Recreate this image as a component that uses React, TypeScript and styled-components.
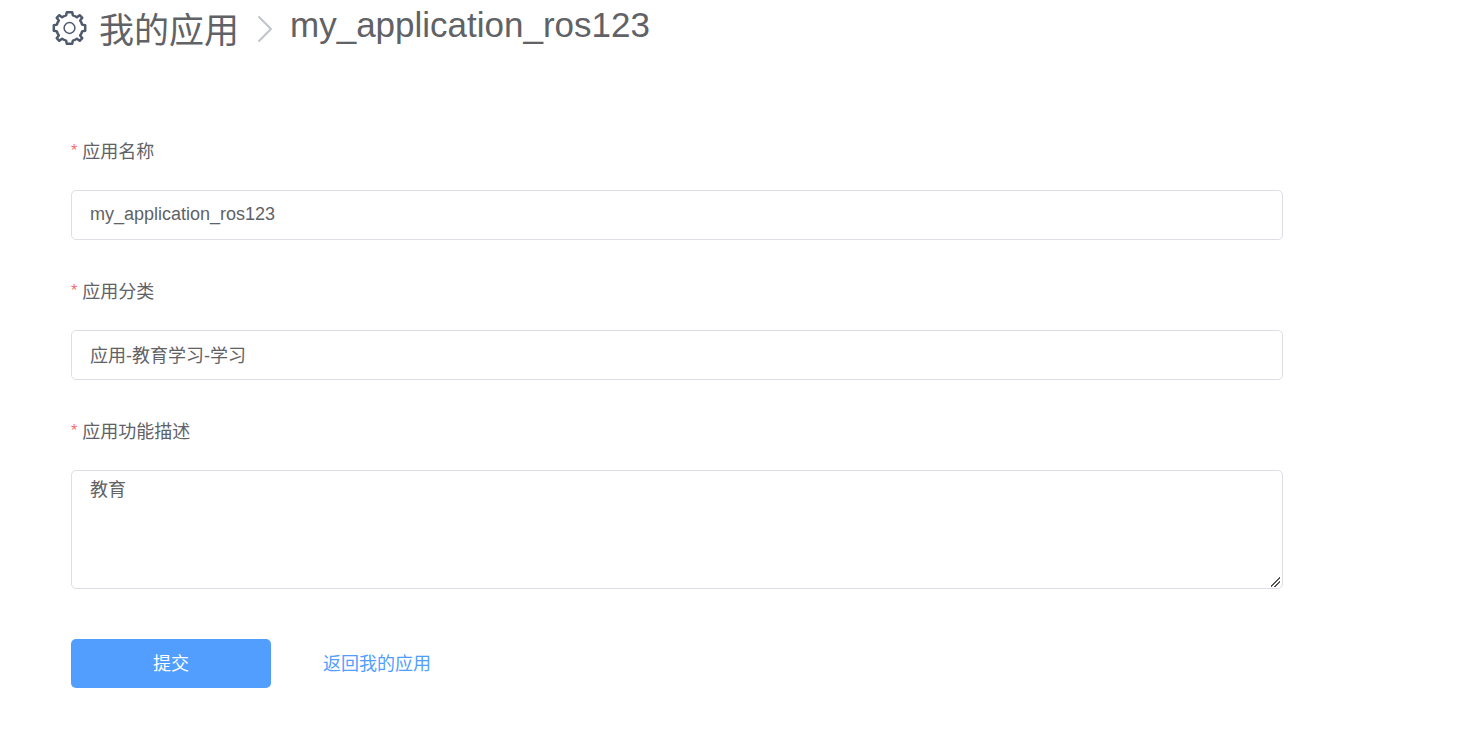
import React from "react";
import styled, { createGlobalStyle } from "styled-components";

const GlobalStyle = createGlobalStyle`
  *, *::before, *::after { box-sizing: border-box; }
  body {
    margin: 0;
    background: #fff;
    color: #606266;
    font-family: "Liberation Sans", Arial, "Noto Sans CJK SC", sans-serif;
  }
  input, textarea, button { font-family: inherit; }
`;

const Breadcrumb = styled.nav`
  display: flex;
  align-items: flex-start;
  padding: 0 52px;
  height: 60px;
  font-size: 35px;
  line-height: 50px;
  white-space: nowrap;
`;

const CrumbLink = styled.a`
  display: flex;
  align-items: center;
  gap: 12px;
  padding-top: 6px;
  color: #606266;
  text-decoration: none;

  svg {
    margin-bottom: 6px;
  }
`;

const Separator = styled.svg`
  margin: 14px 17px 0 18px;
`;

const CurrentPage = styled.span``;

const Form = styled.form`
  display: flex;
  flex-direction: column;
  gap: 30px;
  margin: 70px 196px 40px 71px;
`;

const Field = styled.div`
  display: flex;
  flex-direction: column;
  gap: 18px;
`;

const Label = styled.label`
  display: flex;
  gap: 5px;
  padding-top: 2px;
  font-size: 18px;
  line-height: 40px;

  &::before {
    content: "*";
    color: #f56c6c;
    font-size: 16px;
    line-height: 38px;
  }
`;

const TextInput = styled.input`
  width: 100%;
  height: 50px;
  padding: 0 18px 2px;
  border: 1px solid #dcdfe6;
  border-radius: 5px;
  outline: none;
  background: #fff;
  color: #606266;
  font-size: 18px;
`;

const TextArea = styled.textarea`
  display: block;
  width: 100%;
  height: 119px;
  padding: 6px 18px;
  border: 1px solid #dcdfe6;
  border-radius: 5px;
  outline: none;
  resize: vertical;
  background: #fff;
  color: #606266;
  font-size: 18px;
  line-height: 26px;

  &::-webkit-resizer {
    background: linear-gradient(
        135deg,
        transparent 43%,
        #555 43%,
        #555 53%,
        transparent 53%,
        transparent 68%,
        #555 68%,
        #555 78%,
        transparent 78%
      )
      4px 4px / 9px 10px no-repeat;
  }
`;

const Actions = styled.div`
  display: flex;
  align-items: center;
  gap: 52px;
  padding-top: 20px;
`;

const SubmitButton = styled.button`
  width: 200px;
  height: 49px;
  padding: 0 0 4px;
  border: 0;
  border-radius: 5px;
  background: #529eff;
  color: #fff;
  font-size: 18px;
  cursor: pointer;
`;

const BackLink = styled.a`
  padding-bottom: 4px;
  color: #529eff;
  font-size: 18px;
  text-decoration: none;
`;

const GearIcon = () => (
  <svg width="35" height="36" viewBox="-17.5 -18 35 36" fill="none" stroke="#4e5a6b" aria-hidden="true">
    <path
      strokeWidth="2.5"
      strokeLinejoin="round"
      d="M-2.7 -15.7H2.7L3.4 -12.6Q6 -12 7.4 -10.7L10.2 -12.8L12.8 -10.2L10.7 -7.4Q12 -6 12.6 -3.4L15.7 -2.7V2.7L12.6 3.4Q12 6 10.7 7.4L12.8 10.2L10.2 12.8L7.4 10.7Q6 12 3.4 12.6L2.7 15.7H-2.7L-3.4 12.6Q-6 12 -7.4 10.7L-10.2 12.8L-12.8 10.2L-10.7 7.4Q-12 6 -12.6 3.4L-15.7 2.7V-2.7L-12.6 -3.4Q-12 -6 -10.7 -7.4L-12.8 -10.2L-10.2 -12.8L-7.4 -10.7Q-6 -12 -3.4 -12.6Z"
    />
    <circle r="5.4" strokeWidth="1.5" />
  </svg>
);

export default function App() {
  return (
    <>
      <GlobalStyle />
      <Breadcrumb>
        <CrumbLink href="#apps">
          <GearIcon />
          <span>我的应用</span>
        </CrumbLink>
        <Separator width="16" height="30" viewBox="0 0 16 30" fill="none" stroke="#c0c4cc" strokeWidth="2" strokeLinecap="round" strokeLinejoin="round" aria-hidden="true">
          <path d="M2 3L14 15L2 27" />
        </Separator>
        <CurrentPage>my_application_ros123</CurrentPage>
      </Breadcrumb>
      <main>
        <Form onSubmit={(event: React.FormEvent) => event.preventDefault()}>
          <Field>
            <Label htmlFor="name">应用名称</Label>
            <TextInput id="name" type="text" defaultValue="my_application_ros123" />
          </Field>
          <Field>
            <Label htmlFor="category">应用分类</Label>
            <TextInput id="category" type="text" defaultValue="应用-教育学习-学习" />
          </Field>
          <Field>
            <Label htmlFor="description">应用功能描述</Label>
            <TextArea id="description" defaultValue="教育" />
          </Field>
          <Actions>
            <SubmitButton type="submit">提交</SubmitButton>
            <BackLink href="#apps">返回我的应用</BackLink>
          </Actions>
        </Form>
      </main>
    </>
  );
}
